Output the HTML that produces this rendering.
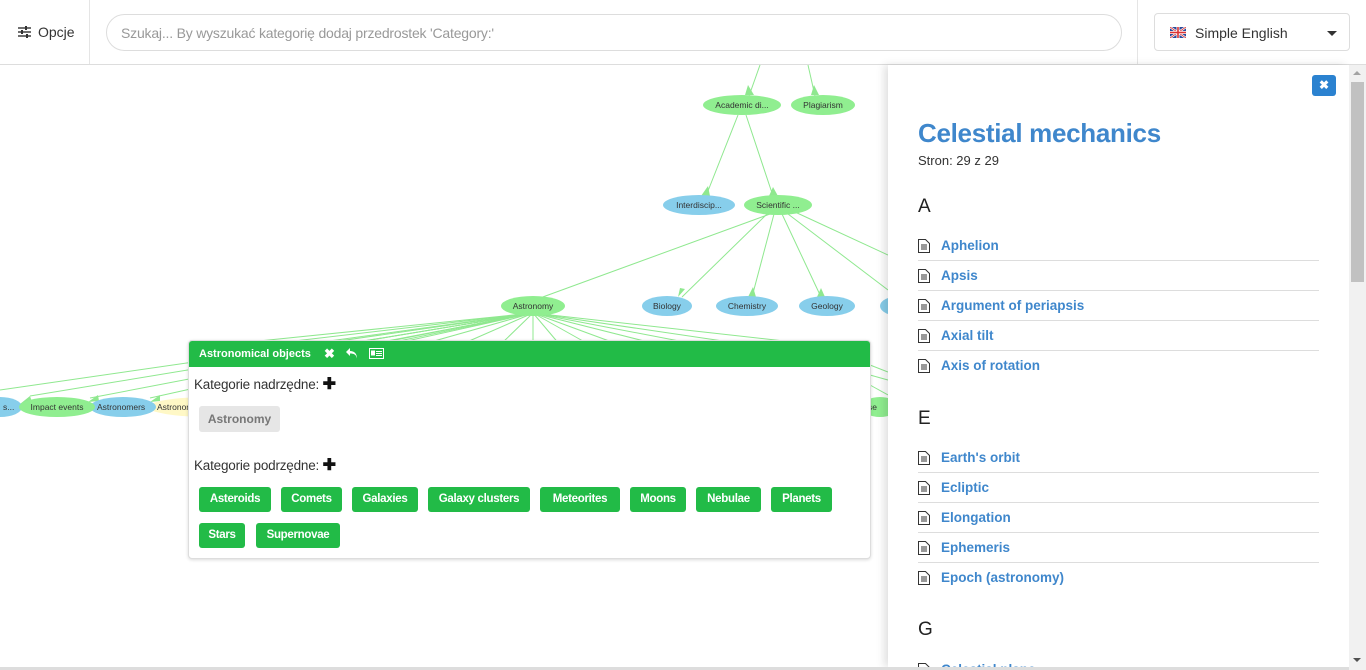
<!DOCTYPE html>
<html><head><meta charset="utf-8">
<style>
*{box-sizing:border-box;margin:0;padding:0}
body{width:1366px;height:670px;overflow:hidden;background:#fff;font-family:"Liberation Sans",sans-serif;position:relative;color:#333}
.top{position:absolute;left:0;top:0;width:1366px;height:65px;border-bottom:1px solid #ddd;background:#fff}
.opc{position:absolute;left:0;top:0;width:90px;height:64px;border-right:1px solid #e5e5e5;font-size:14px;color:#333}
.opc span{position:absolute;left:38px;top:24px}
.search{position:absolute;left:106px;top:14px;width:1016px;height:37px;border:1px solid #ddd;border-radius:19px;font-size:14px;color:#999;padding:10px 0 0 14px;letter-spacing:-0.2px}
.sep2{position:absolute;left:1137px;top:0;height:64px;border-left:1px solid #e5e5e5}
.lang{position:absolute;left:1154px;top:13px;width:196px;height:38px;border:1px solid #ddd;border-radius:4px;font-size:14px;color:#333}
.lang span{position:absolute;left:40px;top:11px}
.caret{position:absolute;left:172px;top:17px;border-left:5px solid transparent;border-right:5px solid transparent;border-top:5px solid #333}
svg.g{position:absolute;left:0;top:65px}
.panel{position:absolute;left:888px;top:65px;width:461px;height:602px;background:#fff;box-shadow:-4px 0 8px rgba(0,0,0,.12);overflow:hidden}
.sb{position:absolute;left:1349px;top:65px;width:17px;height:605px;background:#f1f1f1}
.sb .th{position:absolute;left:2px;top:17px;width:13px;height:200px;background:#c1c1c1}
.x{position:absolute;left:424px;top:10px;width:24px;height:21px;background:#2b82d0;border-radius:3px;color:#fff;font-size:12px;text-align:center;line-height:21px;font-weight:bold}
h1{position:absolute;left:30px;top:53px;font-size:26px;color:#3f87cc;font-weight:bold;letter-spacing:-0.3px}
.cnt{position:absolute;left:30px;top:88px;font-size:13px;color:#333}
.let{position:absolute;left:30px;font-size:19px;color:#222}
.it{position:absolute;left:30px;width:401px;height:30px;border-bottom:1px solid #ddd;font-size:13.5px;font-weight:bold;color:#3f87cc}
.it.n{border-bottom:none}
.it span{position:absolute;left:23px;top:7px}
.it svg{position:absolute;left:0;top:8px}
.pop{position:absolute;left:188px;top:340px;width:683px;height:219px;background:#fff;border:1px solid #ddd;border-radius:4px;box-shadow:0 1px 3px rgba(0,0,0,.15)}
.ph{position:absolute;left:0;top:0;width:681px;height:26px;background:#22bb47;border-radius:3px 3px 0 0;color:#fff;font-weight:bold;font-size:11px}
.pl{position:absolute;left:5px;font-size:13.5px;color:#333;letter-spacing:-0.2px}
.gb{position:absolute;height:25px;background:#22bb47;color:#fff;font-weight:bold;font-size:11.5px;border-radius:3px;text-align:center;line-height:25px;letter-spacing:-0.3px}
.grey{position:absolute;left:10px;top:65px;width:81px;height:26px;background:#e6e6e6;border-radius:3px;color:#777;font-weight:bold;font-size:12px;text-align:center;line-height:26px}
</style></head><body>
<div class="top">
 <div class="opc"><svg style="position:absolute;left:18px;top:26px" width="13" height="12" viewBox="0 0 13 12"><g stroke="#333" stroke-width="1.4"><line x1="0" y1="2" x2="13" y2="2"/><line x1="0" y1="6" x2="13" y2="6"/><line x1="0" y1="10" x2="13" y2="10"/></g><g fill="#333"><rect x="7" y="0" width="2" height="4"/><rect x="3" y="4" width="2" height="4"/><rect x="8" y="8" width="2" height="4"/></g></svg><span>Opcje</span></div>
 <div class="search">Szukaj... By wyszukać kategorię dodaj przedrostek 'Category:'</div>
 <div class="sep2"></div>
 <div class="lang"><svg style="position:absolute;left:15px;top:13px" width="16" height="11" viewBox="0 0 16 11"><rect width="16" height="11" fill="#2a4a9a"/><path d="M0 0L16 11M16 0L0 11" stroke="#fff" stroke-width="2.2"/><path d="M0 0L16 11M16 0L0 11" stroke="#d33" stroke-width="0.8"/><rect x="6.5" width="3" height="11" fill="#fff"/><rect y="4" width="16" height="3" fill="#fff"/><rect x="7.2" width="1.6" height="11" fill="#d33"/><rect y="4.7" width="16" height="1.6" fill="#d33"/></svg><span>Simple English</span><div class="caret"></div></div>
</div>

<svg class="g" width="888" height="605" viewBox="0 65 888 605" font-family="Liberation Sans,sans-serif" font-size="8.5" fill="#333">
<g stroke="#8fe88f" stroke-width="1" fill="none">
<line x1="760" y1="65" x2="749" y2="96"/><line x1="808" y1="65" x2="815" y2="96"/>
<line x1="738" y1="115" x2="706" y2="196"/><line x1="746" y1="115" x2="773" y2="196"/>
<line x1="770" y1="214" x2="540" y2="298"/><line x1="767" y1="214" x2="682" y2="297"/><line x1="774" y1="214" x2="752" y2="297"/><line x1="782" y1="214" x2="821" y2="297"/><line x1="788" y1="214" x2="888" y2="290"/><line x1="795" y1="212" x2="888" y2="255"/>
<line x1="533" y1="313" x2="0" y2="390"/><line x1="533" y1="313" x2="30" y2="396"/><line x1="533" y1="313" x2="90" y2="398"/><line x1="533" y1="313" x2="150" y2="398"/><line x1="533" y1="313" x2="190" y2="370"/><line x1="533" y1="313" x2="190" y2="380"/><line x1="533" y1="313" x2="220" y2="345"/><line x1="533" y1="313" x2="260" y2="345"/><line x1="533" y1="313" x2="300" y2="345"/><line x1="533" y1="313" x2="340" y2="345"/><line x1="533" y1="313" x2="380" y2="345"/><line x1="533" y1="313" x2="420" y2="345"/><line x1="533" y1="313" x2="460" y2="345"/><line x1="533" y1="313" x2="500" y2="345"/><line x1="533" y1="313" x2="533" y2="345"/><line x1="533" y1="313" x2="560" y2="345"/><line x1="533" y1="313" x2="590" y2="345"/><line x1="533" y1="313" x2="620" y2="345"/><line x1="533" y1="313" x2="660" y2="345"/><line x1="533" y1="313" x2="700" y2="345"/><line x1="533" y1="313" x2="750" y2="345"/><line x1="533" y1="313" x2="820" y2="345"/>
<line x1="870" y1="365" x2="888" y2="372"/><line x1="870" y1="375" x2="888" y2="380"/><line x1="870" y1="385" x2="888" y2="395"/>
</g>
<g fill="#8fe88f"><path d="M745 95l9 0-6 -10z"/><path d="M811 95l8 0-5 -10z"/><path d="M701 196l9 0-2 -10z"/><path d="M769 196l9 0-5 -9z"/><path d="M678 297l7 -8-5-1z"/><path d="M748 297l8 0-3 -10z"/><path d="M817 297l8 0-4 -9z"/>
<path d="M20 404l10-8 2 6z"/><path d="M88 402l10-7 1 6z"/><path d="M150 402l10-7 0 6z"/></g>
<ellipse cx="742" cy="105" rx="39" ry="10" fill="#90ee90"/><text x="742" y="108" text-anchor="middle">Academic di...</text>
<ellipse cx="823" cy="105" rx="32" ry="10" fill="#90ee90"/><text x="823" y="108" text-anchor="middle">Plagiarism</text>
<ellipse cx="699" cy="205" rx="36" ry="10" fill="#87ceeb"/><text x="699" y="208" text-anchor="middle">Interdiscip...</text>
<ellipse cx="778" cy="205" rx="34" ry="10" fill="#90ee90"/><text x="778" y="208" text-anchor="middle">Scientific ...</text>
<ellipse cx="533" cy="306" rx="32" ry="10" fill="#90ee90"/><text x="533" y="309" text-anchor="middle">Astronomy</text>
<ellipse cx="667" cy="306" rx="25" ry="10" fill="#87ceeb"/><text x="667" y="309" text-anchor="middle">Biology</text>
<ellipse cx="747" cy="306" rx="31" ry="10" fill="#87ceeb"/><text x="747" y="309" text-anchor="middle">Chemistry</text>
<ellipse cx="827" cy="306" rx="28" ry="10" fill="#87ceeb"/><text x="827" y="309" text-anchor="middle">Geology</text>
<ellipse cx="900" cy="306" rx="20" ry="10" fill="#87ceeb"/>
<ellipse cx="0" cy="407" rx="22" ry="10" fill="#87ceeb"/><text x="3" y="410">s...</text>
<ellipse cx="210" cy="407" rx="62" ry="10" fill="#fff8c6"/><text x="157" y="410">Astronomy</text>
<ellipse cx="123" cy="407" rx="33" ry="10" fill="#87ceeb"/><text x="97" y="410">Astronomers</text>
<ellipse cx="57" cy="407" rx="38" ry="10" fill="#90ee90"/><text x="57" y="410" text-anchor="middle">Impact events</text>
<ellipse cx="880" cy="407" rx="18" ry="10" fill="#90ee90"/><text x="868" y="410">se</text>
</svg>

<div class="pop">
 <div class="ph"><span style="position:absolute;left:10px;top:7px">Astronomical objects</span><span style="position:absolute;left:135px;top:5px;font-size:13px">✖</span><svg style="position:absolute;left:156px;top:6px" width="14" height="13" viewBox="0 0 14 13"><path d="M5 1L1 5l4 4V6.5c4 0 6 1 7 5 0-5-3-7.5-7-7.5z" fill="#fff"/></svg><svg style="position:absolute;left:180px;top:7px" width="15" height="11" viewBox="0 0 15 11"><rect x=".5" y=".5" width="14" height="10" fill="none" stroke="#fff"/><rect x="2" y="2.5" width="4" height="5" fill="#fff"/><rect x="7" y="3" width="6" height="1" fill="#fff"/><rect x="7" y="5" width="6" height="1" fill="#fff"/><rect x="7" y="7" width="6" height="1" fill="#fff"/></svg></div>
 <div class="pl" style="top:33px">Kategorie nadrzędne: <b style="color:#111;font-size:16px">✚</b></div>
 <div class="grey">Astronomy</div>
 <div class="pl" style="top:114px">Kategorie podrzędne: <b style="color:#111;font-size:16px">✚</b></div>
 <div class="gb" style="left:10px;top:146px;width:72px">Asteroids</div>
 <div class="gb" style="left:92px;top:146px;width:61px">Comets</div>
 <div class="gb" style="left:163px;top:146px;width:66px">Galaxies</div>
 <div class="gb" style="left:239px;top:146px;width:102px">Galaxy clusters</div>
 <div class="gb" style="left:351px;top:146px;width:80px">Meteorites</div>
 <div class="gb" style="left:441px;top:146px;width:56px">Moons</div>
 <div class="gb" style="left:507px;top:146px;width:65px">Nebulae</div>
 <div class="gb" style="left:582px;top:146px;width:61px">Planets</div>
 <div class="gb" style="left:10px;top:182px;width:46px">Stars</div>
 <div class="gb" style="left:67px;top:182px;width:84px">Supernovae</div>
</div>

<div class="panel">
 <div class="x">✖</div>
 <h1>Celestial mechanics</h1>
 <div class="cnt">Stron: 29 z 29</div>
 <div class="let" style="top:131px">A</div>
 <div class="it" style="top:166px"><svg width="12" height="14" viewBox="0 0 12 14"><path d="M.5.5h7l4 4v9h-11z" fill="none" stroke="#333"/><path d="M3 6h6M3 8h6M3 10h6" stroke="#333"/></svg><span>Aphelion</span></div>
 <div class="it" style="top:196px"><svg width="12" height="14" viewBox="0 0 12 14"><path d="M.5.5h7l4 4v9h-11z" fill="none" stroke="#333"/><path d="M3 6h6M3 8h6M3 10h6" stroke="#333"/></svg><span>Apsis</span></div>
 <div class="it" style="top:226px"><svg width="12" height="14" viewBox="0 0 12 14"><path d="M.5.5h7l4 4v9h-11z" fill="none" stroke="#333"/><path d="M3 6h6M3 8h6M3 10h6" stroke="#333"/></svg><span>Argument of periapsis</span></div>
 <div class="it" style="top:256px"><svg width="12" height="14" viewBox="0 0 12 14"><path d="M.5.5h7l4 4v9h-11z" fill="none" stroke="#333"/><path d="M3 6h6M3 8h6M3 10h6" stroke="#333"/></svg><span>Axial tilt</span></div>
 <div class="it n" style="top:286px"><svg width="12" height="14" viewBox="0 0 12 14"><path d="M.5.5h7l4 4v9h-11z" fill="none" stroke="#333"/><path d="M3 6h6M3 8h6M3 10h6" stroke="#333"/></svg><span>Axis of rotation</span></div>
 <div class="let" style="top:343px">E</div>
 <div class="it" style="top:378px"><svg width="12" height="14" viewBox="0 0 12 14"><path d="M.5.5h7l4 4v9h-11z" fill="none" stroke="#333"/><path d="M3 6h6M3 8h6M3 10h6" stroke="#333"/></svg><span>Earth's orbit</span></div>
 <div class="it" style="top:408px"><svg width="12" height="14" viewBox="0 0 12 14"><path d="M.5.5h7l4 4v9h-11z" fill="none" stroke="#333"/><path d="M3 6h6M3 8h6M3 10h6" stroke="#333"/></svg><span>Ecliptic</span></div>
 <div class="it" style="top:438px"><svg width="12" height="14" viewBox="0 0 12 14"><path d="M.5.5h7l4 4v9h-11z" fill="none" stroke="#333"/><path d="M3 6h6M3 8h6M3 10h6" stroke="#333"/></svg><span>Elongation</span></div>
 <div class="it" style="top:468px"><svg width="12" height="14" viewBox="0 0 12 14"><path d="M.5.5h7l4 4v9h-11z" fill="none" stroke="#333"/><path d="M3 6h6M3 8h6M3 10h6" stroke="#333"/></svg><span>Ephemeris</span></div>
 <div class="it n" style="top:498px"><svg width="12" height="14" viewBox="0 0 12 14"><path d="M.5.5h7l4 4v9h-11z" fill="none" stroke="#333"/><path d="M3 6h6M3 8h6M3 10h6" stroke="#333"/></svg><span>Epoch (astronomy)</span></div>
 <div class="let" style="top:554px">G</div>
 <div class="it n" style="top:590px"><svg width="12" height="14" viewBox="0 0 12 14"><path d="M.5.5h7l4 4v9h-11z" fill="none" stroke="#333"/></svg><span>Celestial plane</span></div>
</div>
<div class="sb"><div class="th"></div><div style="position:absolute;left:4px;top:6px;border-left:4px solid transparent;border-right:4px solid transparent;border-bottom:4px solid #a3a3a3"></div><div style="position:absolute;left:4px;top:593px;border-left:4px solid transparent;border-right:4px solid transparent;border-top:4px solid #505050"></div></div>
<div style="position:absolute;left:0;top:667px;width:1349px;height:3px;background:#ddd"></div>
</body></html>
